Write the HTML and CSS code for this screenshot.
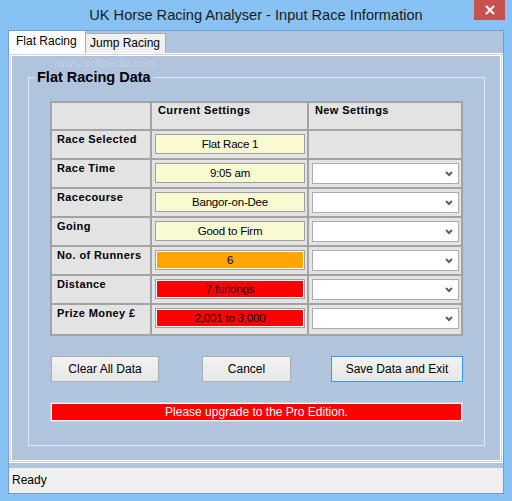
FILE: index.html
```html
<!DOCTYPE html>
<html>
<head>
<meta charset="utf-8">
<link rel="stylesheet" href="styles.css">
</head>
<body>
<div class="window">
  <div class="titlebar">
    <span class="title">UK Horse Racing Analyser - Input Race Information</span>
    <div class="close"><svg width="10" height="10" viewBox="0 0 10 10"><path d="M1 1 L9 9 M9 1 L1 9" stroke="#fff" stroke-width="2" fill="none"/></svg></div>
  </div>
  <div class="client">
    <div class="tabs">
      <div class="tab active">Flat Racing</div>
      <div class="tab">Jump Racing</div>
    </div>
    <div class="page">
      <div class="watermark">www.softpedia.com</div>
      <fieldset class="group">
        <legend>Flat Racing Data</legend>
        <div class="grid">
          <div class="cell"></div>
          <div class="cell head">Current Settings</div>
          <div class="cell head">New Settings</div>

          <div class="cell label">Race Selected</div>
          <div class="cell"><div class="box yellow">Flat Race 1</div></div>
          <div class="cell"></div>

          <div class="cell label">Race Time</div>
          <div class="cell"><div class="box yellow">9:05 am</div></div>
          <div class="cell"><div class="select"><svg width="8" height="6" viewBox="0 0 8 6"><path d="M1 1 L4 4 L7 1" stroke="#606060" stroke-width="2" fill="none"/></svg></div></div>

          <div class="cell label">Racecourse</div>
          <div class="cell"><div class="box yellow">Bangor-on-Dee</div></div>
          <div class="cell"><div class="select"><svg width="8" height="6" viewBox="0 0 8 6"><path d="M1 1 L4 4 L7 1" stroke="#606060" stroke-width="2" fill="none"/></svg></div></div>

          <div class="cell label">Going</div>
          <div class="cell"><div class="box yellow">Good to Firm</div></div>
          <div class="cell"><div class="select"><svg width="8" height="6" viewBox="0 0 8 6"><path d="M1 1 L4 4 L7 1" stroke="#606060" stroke-width="2" fill="none"/></svg></div></div>

          <div class="cell label">No. of Runners</div>
          <div class="cell"><div class="box orange">6</div></div>
          <div class="cell"><div class="select"><svg width="8" height="6" viewBox="0 0 8 6"><path d="M1 1 L4 4 L7 1" stroke="#606060" stroke-width="2" fill="none"/></svg></div></div>

          <div class="cell label">Distance</div>
          <div class="cell"><div class="box red">7 furlongs</div></div>
          <div class="cell"><div class="select"><svg width="8" height="6" viewBox="0 0 8 6"><path d="M1 1 L4 4 L7 1" stroke="#606060" stroke-width="2" fill="none"/></svg></div></div>

          <div class="cell label">Prize Money £</div>
          <div class="cell"><div class="box red">2,001 to 3,000</div></div>
          <div class="cell"><div class="select"><svg width="8" height="6" viewBox="0 0 8 6"><path d="M1 1 L4 4 L7 1" stroke="#606060" stroke-width="2" fill="none"/></svg></div></div>
        </div>
        <div class="buttons">
          <div class="btn btn-clear">Clear All Data</div>
          <div class="btn btn-cancel">Cancel</div>
          <div class="btn btn-save">Save Data and Exit</div>
        </div>
        <div class="upgrade">Please upgrade to the Pro Edition.</div>
      </fieldset>
    </div>
    <div class="status">Ready</div>
  </div>
</div>
</body>
</html>
```
FILE: styles.css
```css
* { box-sizing: border-box; }
html, body { margin: 0; padding: 0; }
body {
  background: #88c2f5;
  font-family: "Liberation Sans", Arial, sans-serif;
  color: #000;
}
.window { width: 512px; height: 501px; }
.titlebar {
  position: relative;
  height: 30px;
  line-height: 30px;
  text-align: center;
  font-size: 14.6px;
  color: #1a1a1a;
}
.close {
  position: absolute;
  left: 474px;
  top: 0;
  width: 31px;
  height: 20px;
  background: #c75050;
  display: flex;
  align-items: center;
  justify-content: center;
}
.close svg { display: block; }
.client {
  margin-left: 8px;
  width: 496px;
  height: 464px;
  border: 1px solid #6f9fd3;
  background: #b0c4de;
  display: flex;
  flex-direction: column;
}
.tabs {
  height: 22px;
  display: flex;
  align-items: flex-end;
  font-size: 12px;
}
.tab {
  height: 20px;
  width: 81px;
  line-height: 19px;
  padding-left: 4px;
  background: #f0f0f0;
  border: 1px solid #acacac;
  border-bottom: none;
}
.tab.active {
  width: 76px;
  height: 22px;
  line-height: 21px;
  padding-left: 7px;
  background: #fff;
  border: none;
}
.page {
  position: relative;
  height: 410px;
  border: 1px solid #fff;
  box-shadow: inset 0 0 0 1px #cfd5dc, inset 0 0 0 2px #fff;
  padding: 15px 0 0 18px;
}
.watermark {
  position: absolute;
  left: 47px;
  top: 3px;
  font-size: 11px;
  color: #c3d1e3;
  letter-spacing: 0.2px;
}
.group {
  margin: 0;
  width: 457px;
  border: 1px solid #e2e9f2;
  padding: 16px 0 23px 21px;
}
.group legend {
  font-size: 14.5px;
  font-weight: bold;
  padding: 0 2px;
  margin-left: -15px;
  line-height: 16px;
}
.grid {
  width: 413px;
  display: grid;
  grid-template-columns: 98px 155px 152px;
  grid-template-rows: 26px repeat(6, 27px) 29px;
  gap: 2px;
  padding: 2px;
  background: #a3a3a3;
}
.cell { background: #e3e3e3; }
.label, .head {
  font-size: 11px;
  font-weight: bold;
  letter-spacing: 0.4px;
  line-height: 13px;
}
.label { padding: 2px 0 0 5px; }
.head { padding: 1px 0 0 6px; }
.box {
  margin: 3px 2px 0 3px;
  height: 20px;
  border: 1px solid #a0a0a0;
  font-size: 11.5px;
  letter-spacing: -0.2px;
  line-height: 18px;
  text-align: center;
}
.yellow { background: #fafad2; }
.orange { background: #ffa500; box-shadow: inset 0 0 0 1px #fff; }
.red { background: #ff0000; box-shadow: inset 0 0 0 1px #fff; }
.select {
  margin: 3px 2px 0 3px;
  height: 21px;
  border: 1px solid #acacac;
  background: #fff;
  display: flex;
  align-items: center;
  justify-content: flex-end;
  padding-right: 5px;
}
.select svg { display: block; }
.buttons {
  display: flex;
  margin-top: 20px;
  padding-left: 1px;
}
.btn {
  height: 26px;
  border: 1px solid #adadad;
  background: linear-gradient(#f2f2f2, #e6e6e6);
  font-size: 12px;
  line-height: 24px;
  text-align: center;
}
.btn-clear { width: 108px; margin-right: 43px; }
.btn-cancel { width: 89px; margin-right: 40px; }
.btn-save { width: 132px; border-color: #3399ff; }
.upgrade {
  margin-top: 20px;
  width: 413px;
  height: 20px;
  background: #ff0000;
  border: 1px solid #d4d4d4;
  box-shadow: inset 0 0 0 1px #fff;
  color: #fff;
  font-size: 12px;
  line-height: 18px;
  text-align: center;
}
.status {
  margin-top: 5px;
  height: 25px;
  background: #f0f0f0;
  padding-left: 3px;
  font-size: 12px;
  line-height: 25px;
}
```
